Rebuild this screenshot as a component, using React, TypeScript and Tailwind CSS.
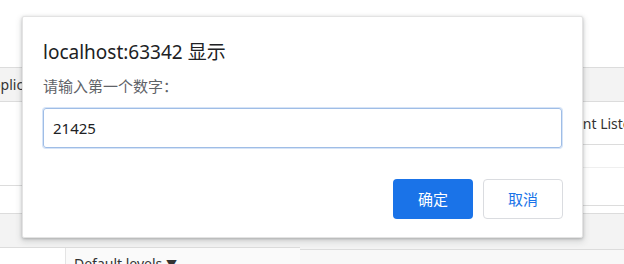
import React from "react";

const font = {
  fontFamily: '"Segoe UI", "Noto Sans", "Noto Sans CJK SC", sans-serif',
};

export default function App() {
  return (
    <div
      className="relative w-[624px] h-[264px] overflow-hidden bg-white text-[#333]"
      style={font}
    >
      {/* background: devtools-like panels */}
      <div className="flex w-full h-full">
        <div className="flex flex-col w-[300px] shrink-0 h-full">
          <div className="shrink-0 h-[68px] border-b border-[#dcdcdc]" />
          <div className="shrink-0 h-[34px] bg-[#f3f3f3] border-b border-[#dcdcdc] flex items-center overflow-hidden whitespace-nowrap">
            <span className="shrink-0 ml-[-17px] text-[14px] text-[#333]">Application</span>
          </div>
          <div className="shrink-0 h-[84px] border-b border-[#dcdcdc]" />
          <div className="shrink-0 h-[28px] border-b border-[#dcdcdc]" />
          <div className="shrink-0 h-[34px] bg-[#f3f3f3] border-b border-[#dcdcdc]" />
          <div className="flex-1 min-h-0 overflow-hidden flex">
            <div className="w-[65px]" />
            <div className="flex-1 bg-[#fafafa] border-l border-[#e4e4e4] pl-[8px] pt-[7px] text-[14px] leading-[18px] text-[#333] whitespace-nowrap">
              Default levels <span className="text-[11px]">▼</span>
            </div>
          </div>
        </div>
        <div className="flex flex-col flex-1 min-w-0 h-full">
          <div className="shrink-0 h-[68px] border-b border-[#dcdcdc]" />
          <div className="shrink-0 h-[34px] bg-[#f3f3f3] border-b border-[#dcdcdc]" />
          <div className="shrink-0 h-[43px] border-b border-[#dcdcdc] flex items-center overflow-hidden whitespace-nowrap">
            <span className="shrink-0 ml-[260px] text-[14px] text-[#333]">Event Listeners</span>
          </div>
          <div className="shrink-0 h-[23px] border-b border-[#efefef]" />
          <div className="shrink-0 h-[38px] border-b border-[#dcdcdc]" />
          <div className="shrink-0 h-[8px] border-b border-[#dcdcdc]" />
          <div className="shrink-0 h-[36px] bg-[#f3f3f3] border-b border-[#dcdcdc]" />
          <div className="flex-1 min-h-0 bg-[#f8f8f8]" />
        </div>
      </div>

      {/* dialog overlay */}
      <div className="absolute left-[22px] top-[16px] w-[561px] h-[222px] bg-white rounded-[2px] border border-[#e3e3e3] shadow-[0_1px_3px_rgba(60,64,67,0.3),0_3px_6px_1px_rgba(60,64,67,0.15)] flex flex-col px-[20px] pt-[23px] pb-[18px]">
        <div className="h-[24px] leading-[24px] text-[19px] text-[#202124] whitespace-nowrap">
          localhost:63342 显示
        </div>
        <div className="mt-[12px] h-[21px] leading-[21px] text-[15px] text-[#5f6368] whitespace-nowrap">
          请输入第一个数字：
        </div>
        <div className="mt-[11px] h-[40px] rounded-[3px] border border-[#9fbde6] ring-1 ring-[#d6e4f7] flex items-center px-[9px] text-[15px] text-[#202124]">
          21425
        </div>
        <div className="mt-auto mr-[-1px] flex justify-end gap-[10px]">
          <button className="w-[80px] h-[40px] rounded-[4px] bg-[#1a73e8] text-white text-[15px]">
            确定
          </button>
          <button className="w-[80px] h-[40px] rounded-[4px] border border-[#dadce0] bg-white text-[#1a73e8] text-[15px]">
            取消
          </button>
        </div>
      </div>
    </div>
  );
}
